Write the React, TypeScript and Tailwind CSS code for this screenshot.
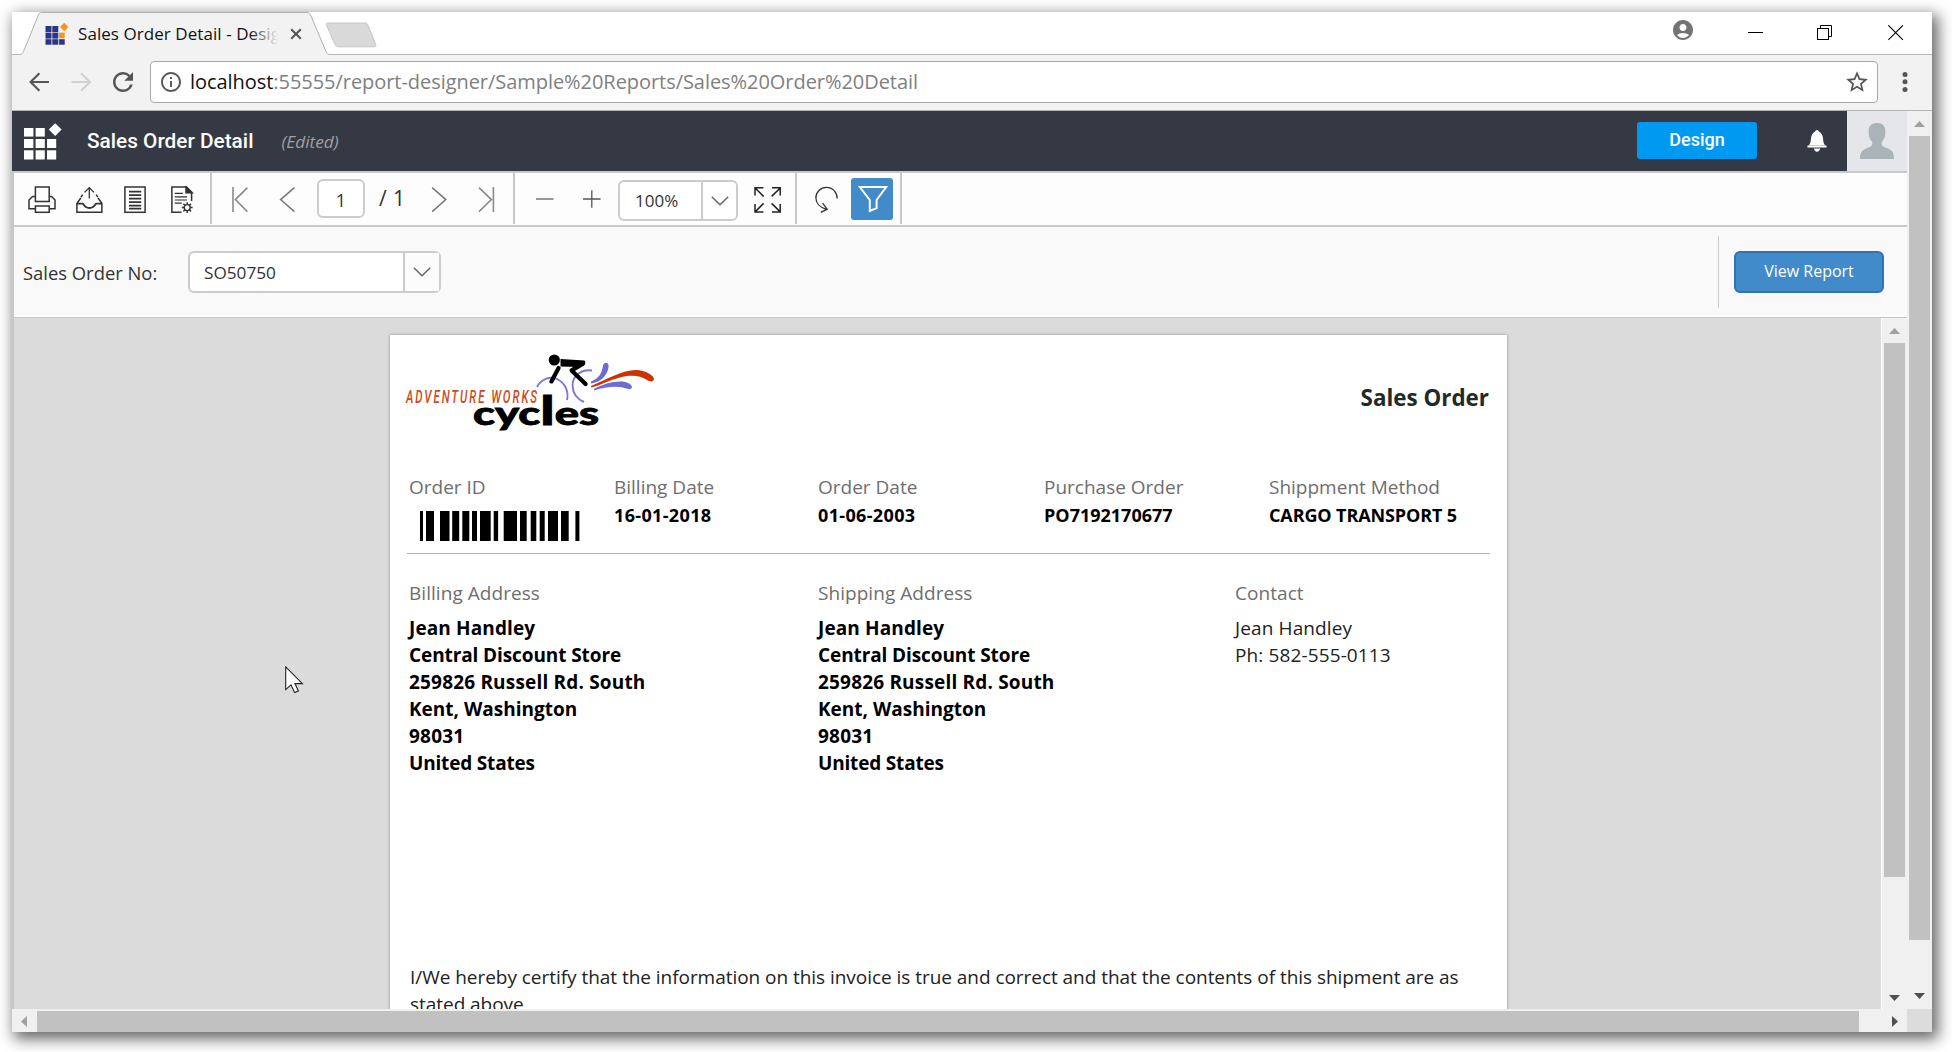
import type { ReactNode } from "react";
import { MdAccountCircle, MdInfoOutline, MdRefresh, MdStarBorder } from "react-icons/md";

const SANS = "font-['Open_Sans',sans-serif]";

/* ---------- browser chrome ---------- */

function Favicon() {
  return (
    <svg width="24" height="24" viewBox="0 0 24 24" className="shrink-0">
      <g fill="#2b3583">
        <rect x="0.5" y="3" width="6" height="6" />
        <rect x="7.3" y="3" width="6" height="6" />
        <rect x="0.5" y="9.6" width="6" height="6" />
        <rect x="7.3" y="9.6" width="6" height="6" />
        <rect x="0.5" y="16.2" width="6" height="5.5" />
        <rect x="7.3" y="16.2" width="6" height="5.5" />
        <rect x="14.1" y="16.2" width="5.6" height="5.5" />
      </g>
      <rect x="14.1" y="9.6" width="5.6" height="5.6" fill="#f7941e" />
      <path d="M19.2 -0.2 L23.4 4 L19.2 8.2 L15 4 Z" fill="#f7941e" />
    </svg>
  );
}

function TabStrip() {
  return (
    <div className="flex h-[43px] shrink-0 items-start border-b border-[#b6b6b6] bg-white">
      <div className="relative -mb-px ml-2 h-[43px] w-[312px] shrink-0">
        <svg width="312" height="43" viewBox="0 0 312 43" className="absolute inset-0">
          <path
            d="M0 43 V42.5 C2 42.3 2.8 41 3.5 39.5 L18 4 C18.8 1.6 19.6 0.5 21.5 0.5 H287 C289 0.5 290 1.6 291 4 L306 39.5 C307 41.5 308 42.4 310 42.5 V43 Z"
            fill="#f2f2f2"
          />
          <path
            d="M0 42.5 C2 42.3 2.8 41 3.5 39.5 L18 4 C18.8 1.6 19.6 0.5 21.5 0.5 H287 C289 0.5 290 1.6 291 4 L306 39.5 C307 41.5 308 42.4 310 42.5"
            fill="none"
            stroke="#b0b0b0"
          />
        </svg>
        <div className="relative flex items-start pl-[25px] pt-[11px]">
          <Favicon />
          <div className="relative -mt-px ml-[9px] h-[24px] w-[203px] overflow-hidden whitespace-nowrap text-[17px] leading-[23px] tracking-[0.06px] text-[#111]">
            Sales Order Detail - Design
            <div className="absolute inset-y-0 right-0 w-[32px] bg-linear-to-r from-transparent to-[#f2f2f2] to-90%" />
          </div>
          <svg width="12" height="12" viewBox="0 0 12 12" className="ml-[9px] mt-[5px]">
            <path d="M1.2 1.2 L10.8 10.8 M10.8 1.2 L1.2 10.8" stroke="#555" strokeWidth="2.1" />
          </svg>
        </div>
      </div>
      <svg width="54" height="27" viewBox="0 0 54 27" className="mt-[10px] -ml-[7px] shrink-0">
        <path
          d="M3 1 H40 C41.6 1 42.2 1.6 43 3.2 L50.6 22 C51.2 24 50.8 24.8 49 24.8 H13.5 C11.6 24.8 10.8 24 10 22.4 L1.6 3.5 C0.8 1.6 1.4 1 3 1 Z"
          fill="#d9d9d9"
          stroke="#c6c6c6"
        />
      </svg>
      <div className="flex-1" />
      <MdAccountCircle size={24} color="#737373" className="mt-[6px]" />
      <svg width="16" height="16" viewBox="0 0 16 16" className="ml-[53px] mt-[12px]">
        <path d="M0 8.5 H15" stroke="#000" />
      </svg>
      <svg width="16" height="16" viewBox="0 0 16 16" className="ml-[53px] mt-[13px]" fill="none" stroke="#000">
        <rect x="0.5" y="3.5" width="11" height="11" />
        <path d="M3.5 3.5 V0.5 H14.5 V11.5 H11.5" />
      </svg>
      <svg width="16" height="16" viewBox="0 0 16 16" className="ml-[55px] mr-[28px] mt-[13px]">
        <path d="M0.3 0.3 L14.9 14.9 M14.9 0.3 L0.3 14.9" stroke="#000" strokeWidth="1.1" />
      </svg>
    </div>
  );
}

function AddressBar() {
  return (
    <div className="flex h-[56px] shrink-0 items-center border-b border-[#b4b4b4] bg-[#f2f2f2] pb-px pl-[17px]">
      <svg width="21" height="20" viewBox="0 0 21 20" fill="none" stroke="#555" strokeWidth="2.1">
        <path d="M20 10 H2 M10.4 1.2 L1.6 10 L10.4 18.8" />
      </svg>
      <svg width="21" height="20" viewBox="0 0 21 20" className="ml-[21px]" fill="none" stroke="#d0d0d0" strokeWidth="2.1">
        <path d="M0.5 10 H19 M10.1 1.2 L18.9 10 L10.1 18.8" />
      </svg>
      <MdRefresh size={30} color="#555" className="ml-[16px]" />
      <div className="ml-[12px] flex h-[42px] w-[1728px] items-center rounded-[4px] border border-[#a9a9a9] bg-white pl-[8px]">
        <MdInfoOutline size={24} color="#5a5a5a" />
        <div className="ml-[7px] whitespace-nowrap text-[20px] leading-[30px] tracking-[-0.05px] text-[#808080]">
          <span className="text-[#111]">localhost</span>:55555/report-designer/Sample%20Reports/Sales%20Order%20Detail
        </div>
        <MdStarBorder size={26} color="#555" className="ml-auto mr-[7px]" />
      </div>
      <svg width="6" height="22" viewBox="0 0 6 22" className="ml-[24px]" fill="#555">
        <circle cx="3" cy="3.4" r="2.5" />
        <circle cx="3" cy="10.8" r="2.5" />
        <circle cx="3" cy="18.4" r="2.5" />
      </svg>
    </div>
  );
}

/* ---------- application header ---------- */

function AppLogo() {
  return (
    <svg width="38" height="38" viewBox="0 0 38 38" fill="#fff" className="shrink-0">
      <rect x="0" y="5" width="9.4" height="8.6" />
      <rect x="11.6" y="5" width="9.2" height="8.6" />
      <rect x="0" y="16" width="9.4" height="9" />
      <rect x="11.6" y="16" width="9.2" height="9" />
      <rect x="23" y="16" width="9.2" height="9" />
      <rect x="0" y="27.3" width="9.4" height="9.2" />
      <rect x="11.6" y="27.3" width="9.2" height="9.2" />
      <rect x="23" y="27.3" width="9.2" height="9.2" />
      <path d="M31.2 0.2 L37.6 6.6 L31.2 13 L24.8 6.6 Z" />
    </svg>
  );
}

function AppHeader() {
  return (
    <div className="flex h-[60px] shrink-0 items-start bg-[#353944] pl-[12px]">
      <div className="pt-[12px]">
        <AppLogo />
      </div>
      <div className="ml-[25px] mt-[15px] whitespace-nowrap font-['Roboto',sans-serif] text-[20.8px] font-medium leading-[30px] text-white">
        Sales Order Detail
      </div>
      <div className="ml-[28px] mt-[17px] text-[17.2px] italic leading-[27px] text-[#a0a0a0]">(Edited)</div>
      <div className="ml-auto mt-[11px] h-[37px] w-[120px] rounded-[3px] bg-[#0099f1] text-center font-['Roboto',sans-serif] text-[18px] font-medium leading-[36px] text-white">
        Design
      </div>
      <svg width="20" height="22" viewBox="0 0 20 22" fill="#fff" className="ml-[50px] mt-[19px]">
        <path d="M10 0 C11 0 11.6 0.8 11.9 1.6 C15 3.2 16 6.5 16.2 10 C16.4 13.4 17.4 14.4 18.4 15.6 H1.6 C2.6 14.4 3.6 13.4 3.8 10 C4 6.5 5 3.2 8.1 1.6 C8.4 0.8 9 0 10 0 Z" />
        <rect x="0.4" y="15.4" width="19.2" height="2.2" rx="0.6" />
        <path d="M6.8 18.6 H13.2 C12.8 20.6 11.6 21.8 10 21.8 C8.4 21.8 7.2 20.6 6.8 18.6 Z" />
      </svg>
      <div className="ml-[20px] flex h-[60px] w-[60px] items-start justify-center bg-[#e4e6e9] pt-[12px]">
        <svg width="34" height="36" viewBox="0 0 34 36" fill="#aab3b7">
          <path d="M17 0 C22.6 0 25.4 3.4 25.4 8 C25.4 12.8 24.6 16.4 21.8 19 C21 22.4 23 23.6 26.6 25 C31.6 26.8 34 29 34 36 H0 C0 29 2.4 26.8 7.4 25 C11 23.6 13 22.4 12.2 19 C9.4 16.4 8.6 12.8 8.6 8 C8.6 3.4 11.4 0 17 0 Z" />
        </svg>
      </div>
    </div>
  );
}

/* ---------- viewer toolbar ---------- */

function Sep({ className }: { className: string }) {
  return <div className={`h-[51px] w-[2px] shrink-0 self-start bg-[#c8c8c8] ${className}`} />;
}

function Icon({ w, className, children, color = "#333" }: { w: number; className: string; children: ReactNode; color?: string }) {
  return (
    <svg
      width={w}
      height="28"
      viewBox={`0 0 ${w} 28`}
      fill="none"
      stroke={color}
      strokeWidth="1.5"
      className={`mt-[13px] shrink-0 self-start ${className}`}
    >
      {children}
    </svg>
  );
}

function Chevron() {
  return (
    <svg width="18" height="10" viewBox="0 0 18 10" fill="none" stroke="#666" strokeWidth="1.5">
      <path d="M0.8 0.8 L9 8.8 L17.2 0.8" />
    </svg>
  );
}

function ViewerToolbar() {
  return (
    <div className="flex h-[56px] shrink-0 items-start border-y-2 border-[#c8c8c8] bg-[#fdfdfd] text-[#333]">
      <Icon w={28} className="ml-[14px]">
        <path d="M7.4 15.5 V1 H21.2 V15.5 Z" />
        <path d="M7.4 10.4 H4.6 L1 14 V22.8 H7.4 M21.2 10.4 H23.6 L27 14 V22.8 H21.2" />
        <rect x="7.4" y="20" width="13.8" height="6.3" />
      </Icon>
      <Icon w={27} className="ml-[20px]">
        <path d="M13.3 12.5 V1.8 M8.6 6.4 L13.3 1.6 L18 6.4" strokeWidth="1.3" />
        <path d="M4.8 12 L0.9 17.6 V26.2 H25.9 V17.6 L22 12" />
        <path d="M5 11.2 L6.6 8.6 M21.8 11.2 L20.2 8.6" />
        <path d="M1 17.6 H6.8 C7.6 17.6 7.8 22 13.4 22 C19 22 19.2 17.6 20 17.6 H25.8" strokeWidth="1.9" />
      </Icon>
      <Icon w={22} className="ml-[21px]">
        <rect x="0.9" y="1" width="20.2" height="25.3" />
        <path d="M5 5.6 H17.2 M5 9.1 H17.2 M5 12.6 H17.2 M5 16.1 H17.2 M5 19.6 H17.2 M5 22.6 H17.2" strokeWidth="1.7" />
      </Icon>
      <Icon w={23} className="ml-[25px]">
        <path d="M10.5 26.3 H0.9 V1 H15.4 L20.6 6.2 V15" />
        <path d="M15 0.6 V6.8 H21.2 Z" fill="#333" />
        <path d="M3.8 7.4 H11.8 M3.8 10.8 H16 M3.8 14 H16 M3.8 17.2 H10.6" strokeWidth="1.2" />
        <circle cx="16.2" cy="21.6" r="3" strokeWidth="1.4" />
        <path
          d="M16.2 16.2 V18.6 M16.2 24.6 V27 M10.8 21.6 H13.2 M19.2 21.6 H21.6 M12.4 17.8 L14 19.4 M18.4 23.8 L20 25.4 M20 17.8 L18.4 19.4 M14 23.8 L12.4 25.4"
          strokeWidth="1.5"
        />
      </Icon>
      <Sep className="ml-[16px]" />
      <Icon w={17} className="ml-[20px]" color="#8a8a8a">
        <path d="M1 1 V26 M15.4 1.6 L3.4 13.6 L15.4 25.6" strokeWidth="1.6" />
      </Icon>
      <Icon w={17} className="ml-[30px]" color="#777">
        <path d="M15.4 1.6 L1.6 13.6 L15.4 25.6" strokeWidth="1.5" />
      </Icon>
      <div className="ml-[21px] mt-[6px] h-[39px] w-[48px] rounded-[6px] border-2 border-[#ccc] bg-white pt-px text-center text-[18px] leading-[36px]">
        1
      </div>
      <div className="ml-[14px] mt-[10px] w-[28px] whitespace-nowrap text-[21px] leading-[30px] tracking-[0.4px]">/ 1</div>
      <Icon w={17} className="ml-[24px]" color="#777">
        <path d="M1.2 1.6 L14.8 13.6 L1.2 25.6" strokeWidth="1.5" />
      </Icon>
      <Icon w={17} className="ml-[30px]" color="#8a8a8a">
        <path d="M15.4 1 V26 M1 1.6 L13.4 13.6 L1 25.6" strokeWidth="1.6" />
      </Icon>
      <Sep className="ml-[18px]" />
      <Icon w={18} className="ml-[21px]" color="#777">
        <path d="M0 13 H17.6" />
      </Icon>
      <Icon w={18} className="ml-[29px]" color="#555">
        <path d="M0 13 H17.6 M8.8 4.2 V21.8" strokeWidth="1.3" />
      </Icon>
      <div className="ml-[17px] mt-[7px] flex h-[41px] w-[120px] rounded-[6px] border-2 border-[#ccc] bg-white">
        <div className="w-[83px] border-r-2 border-[#ccc] pl-[15px] text-[17px] leading-[37px]">100%</div>
        <div className="flex flex-1 items-center justify-center pt-px">
          <Chevron />
        </div>
      </div>
      <Icon w={28} className="ml-[16px]" color="#222">
        <path d="M1 9.6 V1.8 H9.4 M1.4 2.2 L9.6 10.4 M18 1.8 H26.2 V9.6 M26 2.2 L17.6 10.4 M1 18 V26 H9.4 M1.4 25.6 L9.6 17.4 M18 26 H26.2 V18 M26 25.6 L17.6 17.4" strokeWidth="1.5" />
      </Icon>
      <Sep className="ml-[13px]" />
      <Icon w={24} className="ml-[18px]">
        <path d="M22.2 12.5 C22.2 6.4 17.6 1.4 11.4 1.4 C5.6 1.4 0.9 6 0.9 11.8 C0.9 17 5 21.6 11.6 23.4 M7.6 17.2 L12.2 23.2 L5.8 26.4" strokeWidth="1.3" />
      </Icon>
      <div className="ml-[12px] mt-[5px] flex h-[42px] w-[42px] items-center justify-center rounded-[3px] bg-[#428bca]">
        <svg width="30" height="28" viewBox="0 0 30 28" fill="none" stroke="#fff" strokeWidth="2" className="ml-px">
          <path d="M1.8 2 H28.2 L18.6 15 V23.2 L11.8 26 V15 Z" />
        </svg>
      </div>
      <Sep className="ml-[7px]" />
    </div>
  );
}

function ParameterBar() {
  return (
    <div className="flex h-[91px] shrink-0 items-start border-b border-[#c8c8c8] bg-[#f9f9f9] pl-[9px] shadow-[inset_0_-2px_0_#fff]">
      <div className="mt-[32px] w-[165px] whitespace-nowrap text-[18.4px] leading-[28px] text-[#333]">Sales Order No:</div>
      <div className="mt-[24px] flex h-[42px] w-[253px] rounded-[6px] border-2 border-[#ccc] bg-white">
        <div className="w-[215px] border-r-2 border-[#ccc] pl-[14px] text-[17.2px] leading-[39px] text-[#333]">SO50750</div>
        <div className="flex flex-1 items-center justify-center bg-[#fcfcfc]">
          <Chevron />
        </div>
      </div>
      <div className="ml-auto mt-[9px] h-[72px] w-px bg-[#ccc]" />
      <div className="ml-[15px] mr-[23px] mt-[24px] h-[42px] w-[150px] rounded-[6px] border-2 border-[#2f73b3] bg-[#428bca] text-center text-[16px] leading-[37px] text-white">
        View Report
      </div>
    </div>
  );
}

/* ---------- report page ---------- */

function CyclesLogo() {
  return (
    <svg width="270" height="100" viewBox="0 0 270 100" className="shrink-0">
      <g fill="none" stroke="#7b78d8" strokeWidth="1.9">
        <path d="M137 42 C141 34 150 31 157 34 C165 38 169 46 167 55" />
        <path d="M192 25.5 C180 24 172 32 172.6 41 C173 49 178 54.5 184 57" />
      </g>
      <g fill="#6f6bd2">
        <path d="M191 36.5 C199 33.5 202 28 203 20.5 C204 16.5 209 17 208.6 21.5 C207.6 31 200 37.5 191 38.5 Z" />
        <path d="M194 44 C205 38 219 34.5 228 38 C234.5 41 232 45.4 227.5 43.8 C219 40.6 208 41 194 45.4 Z" />
      </g>
      <path
        d="M191 41 C208 34 222 25 236 25 C246 25 254 31 254 34 C253.6 37 250 37 247 35 C240 30 230 29.6 220 32.4 C210 35 200 40 191.4 42.6 Z"
        fill="#cc3300"
      />
      <circle cx="154.3" cy="15" r="5.6" fill="#000" />
      <path d="M160.5 14 L184.6 15.6 Q186.4 18 184 20 L178 22 L160.5 21.4 Z" fill="#000" />
      <g fill="none" stroke="#000" strokeWidth="4.2" strokeLinecap="round">
        <path d="M158.6 23 L151.4 36.4" />
        <path d="M183 18.6 L171.6 25.4 L185.6 39" strokeLinejoin="round" />
      </g>
      <text
        x="6"
        y="58.4"
        textLength="133"
        lengthAdjust="spacingAndGlyphs"
        fill="#cf4a22"
        className="font-['Roboto',sans-serif] text-[18px] font-medium italic tracking-[3px]"
      >
        ADVENTURE WORKS
      </text>
      <text
        x="73"
        y="79.8"
        textLength="126"
        lengthAdjust="spacingAndGlyphs"
        fill="#000"
        stroke="#000"
        strokeWidth="0.8"
        className="font-['Lato',sans-serif] text-[32px] font-black"
      >
        cyc<tspan className="text-[40px]">l</tspan>es
      </text>
    </svg>
  );
}

const BARS: [number, number][] = [
  [0, 3], [6, 8], [20, 9.5], [32.2, 7], [42.3, 7], [52, 5], [60, 10.7], [73.7, 4.4],
  [83.7, 13.3], [100, 6.7], [110.7, 5.6], [119.7, 5], [128, 10], [141, 7.7], [155.4, 4],
];

function Barcode() {
  return (
    <svg width="160" height="30" viewBox="0 0 160 30" className="ml-[11px] mt-[10px]">
      {BARS.map(([x, w]) => (
        <rect key={x} x={x} y="0" width={w} height="30" fill="#000" />
      ))}
    </svg>
  );
}

function Field({ label, value, w, tracking = "" }: { label: string; value?: string; w: number; tracking?: string }) {
  return (
    <div className="shrink-0 whitespace-nowrap" style={{ width: w }}>
      <div className="text-[19px] leading-[28px] text-[#6e6e6e]">{label}</div>
      {value ? <div className={`text-[18px] font-bold leading-[28px] text-black ${tracking}`}>{value}</div> : <Barcode />}
    </div>
  );
}

type Line = { text: string; style: string };

const ADDRESS: Line[] = [
  { text: "Jean Handley", style: "font-bold text-black tracking-[0.12px]" },
  { text: "Central Discount Store", style: "font-bold text-black tracking-[-0.1px]" },
  { text: "259826 Russell Rd. South", style: "font-bold text-black tracking-[0.18px]" },
  { text: "Kent, Washington", style: "font-bold text-black tracking-[0px]" },
  { text: "98031", style: "font-bold text-black tracking-[0.2px]" },
  { text: "United States", style: "font-bold text-black tracking-[-0.18px]" },
];

const CONTACT: Line[] = [
  { text: "Jean Handley", style: "text-[#222] tracking-[0.12px]" },
  { text: "Ph: 582-555-0113", style: "text-[#222] tracking-[0.12px]" },
];

function Address({ label, lines, w }: { label: string; lines: Line[]; w: number }) {
  return (
    <div className="shrink-0 whitespace-nowrap text-[19px] leading-[27px]" style={{ width: w }}>
      <div className="mb-2 tracking-[0.05px] text-[#6e6e6e]">{label}</div>
      {lines.map((line) => (
        <div key={line.text} className={line.style}>
          {line.text}
        </div>
      ))}
    </div>
  );
}

function ReportPage() {
  return (
    <div className="ml-[376px] mt-[17px] h-[700px] w-[1117px] shrink-0 bg-white pl-[17px] pr-[17px] shadow-[0_0_3px_rgba(0,0,0,0.35)]">
      <div className="flex h-[138px] items-start justify-between">
        <div className="-ml-[7px] mt-[10px]">
          <CyclesLogo />
        </div>
        <div className="mr-px mt-[48px] text-[22.4px] font-bold leading-[30px] text-[#222a26]">Sales Order</div>
      </div>
      <div className="flex h-[81px] border-b border-[#b0b0b0] pl-[2px]">
        <Field label="Order ID" w={205} />
        <Field label="Billing Date" value="16-01-2018" w={204} tracking="tracking-[0.35px]" />
        <Field label="Order Date" value="01-06-2003" w={226} tracking="tracking-[0.35px]" />
        <Field label="Purchase Order" value="PO7192170677" w={225} />
        <Field label="Shippment Method" value="CARGO TRANSPORT 5" w={200} tracking="tracking-[-0.12px]" />
      </div>
      <div className="flex pl-[2px] pt-[26px]">
        <Address label="Billing Address" lines={ADDRESS} w={409} />
        <Address label="Shipping Address" lines={ADDRESS} w={417} />
        <Address label="Contact" lines={CONTACT} w={200} />
      </div>
      <div className="mt-[187px] pl-[3px] text-[19px] leading-[27px] tracking-[-0.04px] text-[#222]">
        <div className="whitespace-nowrap">
          I/We hereby certify that the information on this invoice is true and correct and that the contents of this shipment are as
        </div>
        <div>stated above</div>
      </div>
    </div>
  );
}

/* ---------- scrollbars ---------- */

function ArrowUp() {
  return (
    <svg width="11" height="6" viewBox="0 0 11 6" className="shrink-0">
      <path d="M0 6 L5.5 0 L11 6 Z" fill="#a0a0a0" />
    </svg>
  );
}

function ArrowDown() {
  return (
    <svg width="11" height="6" viewBox="0 0 11 6" className="shrink-0">
      <path d="M0 0 L5.5 6 L11 0 Z" fill="#505050" />
    </svg>
  );
}

function HorizontalScrollbar() {
  return (
    <div className="flex h-[23px] shrink-0 bg-[#f0f0f0]">
      <svg width="25" height="23" viewBox="0 0 25 23">
        <path d="M15 7 L9 12.5 L15 18 Z" fill="#a0a0a0" />
      </svg>
      <div className="mt-[2px] h-[21px] w-[1822px] bg-[#c1c1c1]" />
      <svg width="48" height="23" viewBox="0 0 48 23">
        <path d="M33 7 L39 12.5 L33 18 Z" fill="#505050" />
      </svg>
      <div className="flex-1 bg-[#dcdcdc]" />
    </div>
  );
}

export default function App() {
  return (
    <div className={`relative h-[1052px] w-[1952px] overflow-hidden bg-white pl-3 pt-3 ${SANS}`}>
      <div className="flex h-[1020px] w-[1920px] flex-col bg-white shadow-[4px_5px_14px_2px_rgba(0,0,0,0.6)]">
        <TabStrip />
        <AddressBar />
        <div className="flex h-[898px] shrink-0">
          <div className="flex w-[1895px] flex-col">
            <AppHeader />
            <div className="flex h-[838px] flex-col border-l-2 border-[#c8c8c8]">
              <ViewerToolbar />
              <ParameterBar />
              <div className="flex h-[691px] overflow-hidden">
                <div className="flex w-[1868px] items-start overflow-hidden border-r border-white bg-[#dbdbdb]">
                  <ReportPage />
                </div>
                <div className="flex w-[25px] flex-col items-center bg-[#f0f0f0] pt-[10px]">
                  <ArrowUp />
                  <div className="mt-[9px] h-[534px] w-[21px] shrink-0 bg-[#c1c1c1]" />
                  <div className="mt-[118px]">
                    <ArrowDown />
                  </div>
                </div>
              </div>
            </div>
          </div>
          <div className="flex w-[25px] flex-col items-center bg-[#f0f0f0] pt-[10px]">
            <ArrowUp />
            <div className="mt-[9px] h-[804px] w-[21px] shrink-0 bg-[#c1c1c1]" />
            <div className="mt-[53px] flex">
              <ArrowDown />
            </div>
          </div>
        </div>
        <HorizontalScrollbar />
      </div>
      <svg width="20" height="29" viewBox="0 0 20 29" className="absolute left-[285px] top-[666px]">
        <path
          d="M0.7 0.9 V23.6 L6 18.8 L9.6 26.6 L13.4 24.9 L10 17.6 H17.4 Z"
          fill="#fff"
          stroke="#222"
          strokeWidth="1.1"
        />
      </svg>
    </div>
  );
}
